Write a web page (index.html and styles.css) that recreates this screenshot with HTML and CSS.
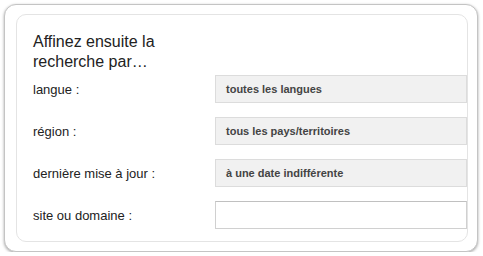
FILE: index.html
```html
<!DOCTYPE html>
<html lang="fr">
<head>
<meta charset="utf-8">
<link rel="stylesheet" href="styles.css">
</head>
<body>
<div class="frame">
  <div class="panel">
    <h2 class="title">Affinez ensuite la<br>recherche par…</h2>
    <div class="form">
      <div class="label">langue :</div>
      <div class="select">toutes les langues</div>
      <div class="label">région :</div>
      <div class="select">tous les pays/territoires</div>
      <div class="label">dernière mise à jour :</div>
      <div class="select">à une date indifférente</div>
      <div class="label">site ou domaine :</div>
      <div class="input"></div>
    </div>
  </div>
</div>
</body>
</html>
```
FILE: styles.css
```css
html, body {
  margin: 0;
  padding: 0;
  background: #fff;
}
body {
  font-family: "Liberation Sans", Arial, sans-serif;
  color: #222;
}
.frame {
  box-sizing: border-box;
  margin: 4px 0 0 4px;
  width: 474px;
  height: 248px;
  border: 1px solid #c4c4c4;
  border-radius: 12px;
  box-shadow: 0 1px 3px rgba(0, 0, 0, 0.35);
  padding: 9px 0 0 11px;
  background: #fff;
}
.panel {
  box-sizing: border-box;
  width: 452px;
  height: 228px;
  border: 1px solid #e4e4e4;
  border-radius: 10px;
  overflow: hidden;
  padding: 17px 0 0 16px;
}
.title {
  margin: 0;
  font-size: 16px;
  line-height: 20px;
  font-weight: normal;
  color: #222;
}
.form {
  margin-top: 3px;
  display: grid;
  grid-template-columns: 182px 252px;
  grid-auto-rows: 28px;
  row-gap: 14px;
  align-items: center;
}
.label {
  font-size: 13px;
  color: #222;
}
.select {
  box-sizing: border-box;
  height: 28px;
  background: #f1f1f1;
  border: 1px solid #dcdcdc;
  padding-left: 10px;
  font-size: 11px;
  font-weight: bold;
  color: #444;
  line-height: 26px;
}
.input {
  box-sizing: border-box;
  height: 28px;
  background: #fff;
  border: 1px solid #d0d0d0;
  border-top-color: #c0c0c0;
}
```
